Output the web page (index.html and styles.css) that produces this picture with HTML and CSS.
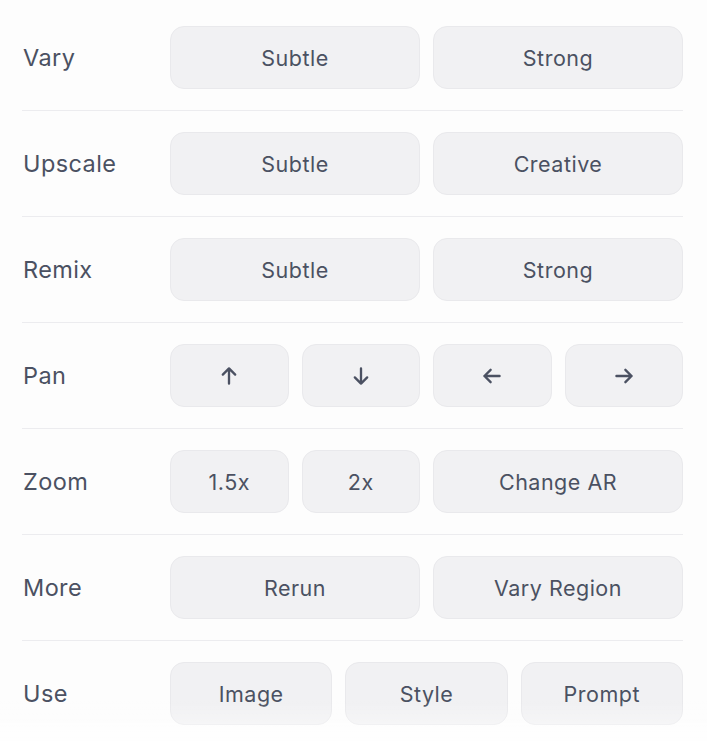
FILE: index.html
```html
<!DOCTYPE html>
<html lang="en">
<head>
    <meta charset="UTF-8">
    <meta name="viewport" content="width=device-width, initial-scale=1.0">
    <title>Image actions</title>
    <link rel="stylesheet" href="styles.css">
</head>
<body>
    <div class="panel">
        <div class="row">
            <div class="label">Vary</div>
            <div class="buttons cols-2">
                <button>Subtle</button>
                <button>Strong</button>
            </div>
        </div>
        <div class="row">
            <div class="label">Upscale</div>
            <div class="buttons cols-2">
                <button>Subtle</button>
                <button>Creative</button>
            </div>
        </div>
        <div class="row">
            <div class="label">Remix</div>
            <div class="buttons cols-2">
                <button>Subtle</button>
                <button>Strong</button>
            </div>
        </div>
        <div class="row">
            <div class="label">Pan</div>
            <div class="buttons cols-4">
                <button aria-label="Pan up">
                    <svg viewBox="0 0 16 16" width="22" height="22"><path d="M8 13.5V2.5M3.5 7L8 2.5 12.5 7"/></svg>
                </button>
                <button aria-label="Pan down">
                    <svg viewBox="0 0 16 16" width="22" height="22"><path d="M8 2.5v11M3.5 9L8 13.5 12.5 9"/></svg>
                </button>
                <button aria-label="Pan left">
                    <svg viewBox="0 0 16 16" width="22" height="22"><path d="M13.5 8h-11M7 3.5L2.5 8 7 12.5"/></svg>
                </button>
                <button aria-label="Pan right">
                    <svg viewBox="0 0 16 16" width="22" height="22"><path d="M2.5 8h11M9 3.5L13.5 8 9 12.5"/></svg>
                </button>
            </div>
        </div>
        <div class="row">
            <div class="label">Zoom</div>
            <div class="buttons cols-4">
                <button>1.5x</button>
                <button>2x</button>
                <button class="span-2">Change AR</button>
            </div>
        </div>
        <div class="row">
            <div class="label">More</div>
            <div class="buttons cols-2">
                <button>Rerun</button>
                <button>Vary Region</button>
            </div>
        </div>
        <div class="row last">
            <div class="label">Use</div>
            <div class="buttons cols-3">
                <button>Image</button>
                <button>Style</button>
                <button>Prompt</button>
            </div>
        </div>
    </div>
    <div class="fade"></div>
</body>
</html>
```

FILE: styles.css
```css
body {
    margin: 0;
    background-color: #fdfdfd;
    font-family: "Inter", "Noto Sans", sans-serif;
    color: #4b5162;
}
.panel {
    padding: 5px 24px 0 22px;
}
.row {
    display: flex;
    align-items: center;
    padding: 21px 0;
    border-bottom: 1px solid #ececef;
}
.row.last {
    border-bottom: none;
}
.label {
    width: 148px;
    box-sizing: border-box;
    flex-shrink: 0;
    font-size: 23.5px;
    letter-spacing: 0.4px;
    padding-left: 1px;
}
.buttons {
    flex: 1;
    display: grid;
    gap: 13px;
}
.cols-2 {
    grid-template-columns: repeat(2, 1fr);
}
.cols-3 {
    grid-template-columns: repeat(3, 1fr);
}
.cols-4 {
    grid-template-columns: repeat(4, 1fr);
}
.span-2 {
    grid-column: span 2;
}
button {
    height: 63px;
    border: 1px solid #e9e9ec;
    border-radius: 14px;
    background-color: #f1f1f3;
    color: #4b5162;
    font-family: inherit;
    font-size: 21.5px;
    letter-spacing: 0.5px;
    display: flex;
    align-items: center;
    justify-content: center;
    padding: 0;
    cursor: pointer;
}
button svg {
    fill: none;
    stroke: #4b5162;
    stroke-width: 1.7;
    stroke-linecap: round;
    stroke-linejoin: round;
}
.fade {
    position: fixed;
    left: 0;
    right: 0;
    bottom: 0;
    height: 40px;
    background: linear-gradient(to bottom, rgba(255,255,255,0), rgba(255,255,255,0.6));
    pointer-events: none;
}
```
